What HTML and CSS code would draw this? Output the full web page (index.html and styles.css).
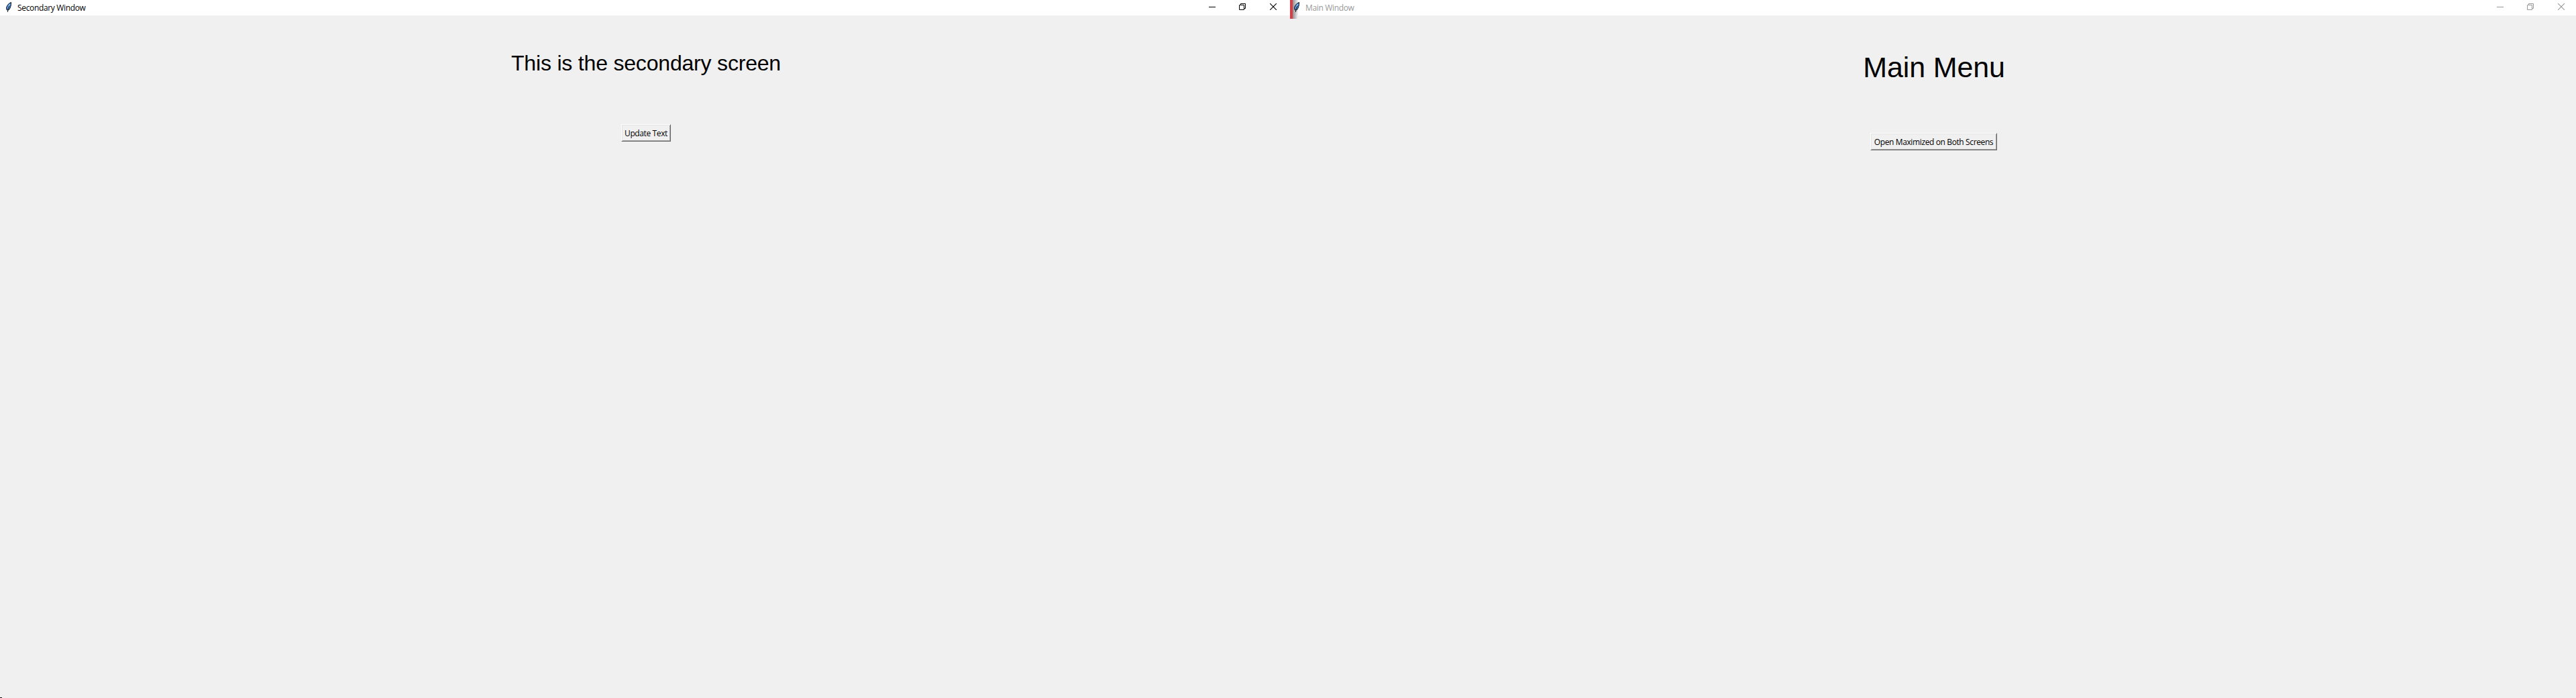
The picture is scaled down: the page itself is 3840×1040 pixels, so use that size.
FILE: index.html
```html
<!DOCTYPE html>
<html lang="en">
<head>
<meta charset="utf-8">
<title>Secondary Window</title>
<link rel="stylesheet" href="styles.css">
</head>
<body>
<svg class="defs" width="0" height="0" aria-hidden="true">
  <symbol id="feather" viewBox="0 0 16 16">
    <path d="M8.500 .500C5.500 1.500 2.500 4.500 1.500 8.500L2 11.500L3 12.500L5.500 11.500C7.500 9 9 4 8.500 .500Z" fill="#3f7cc4" stroke="#15181c"/>
    <path d="M7 3C5 5 4 8 3.500 10" fill="none" stroke="#8fc0f2" stroke-width="1.300"/>
    <path d="M5.800 6C4.500 8.500 3.500 11 3.500 15" fill="none" stroke="#15181c"/>
  </symbol>
  <symbol id="minimize" viewBox="0 0 10 10"><path d="M0 5.500H10" fill="none" stroke="currentColor"/></symbol>
  <symbol id="restore" viewBox="0 0 10 10"><path d="M.500 2.500H7.500V9.500H.500ZM2.500 2.500V.500H9.500V7.500H7.500" fill="none" stroke="currentColor"/></symbol>
  <symbol id="close" viewBox="0 0 10 10"><path d="M0 0L10 10M10 0L0 10" fill="none" stroke="currentColor" stroke-width="1.100"/></symbol>
</svg>
<main class="desktop">
  <section class="window secondary">
    <header class="titlebar">
      <svg class="app-icon" width="16" height="16"><use href="#feather"/></svg>
      <span class="title">Secondary Window</span>
      <div class="controls">
        <svg width="10" height="10"><use href="#minimize"/></svg>
        <svg width="10" height="10"><use href="#restore"/></svg>
        <svg width="10" height="10"><use href="#close"/></svg>
      </div>
    </header>
    <div class="content">
      <h1 class="heading">This is the secondary screen</h1>
      <button class="button update"><span>Update Text</span></button>
    </div>
  </section>
  <section class="window inactive">
    <span class="edge"></span>
    <header class="titlebar">
      <svg class="app-icon" width="16" height="16"><use href="#feather"/></svg>
      <span class="title">Main Window</span>
      <div class="controls">
        <svg width="10" height="10"><use href="#minimize"/></svg>
        <svg width="10" height="10"><use href="#restore"/></svg>
        <svg width="10" height="10"><use href="#close"/></svg>
      </div>
    </header>
    <div class="content">
      <h1 class="heading large">Main Menu</h1>
      <button class="button open"><span>Open Maximized on Both Screens</span></button>
    </div>
  </section>
  <span class="corner"></span>
</main>
</body>
</html>
```
FILE: styles.css
```css
body {
  margin: 0;
  background: #f0f0f0;
  color: #000;
  font-family: "Open Sans", "Noto Sans", sans-serif;
}
.defs { display: block; height: 0; }
.desktop {
  position: relative;
  display: grid;
  grid-template-columns: 1923px 1920px;
  width: 3840px;
  height: 1040px;
  overflow: hidden;
}
.window { position: relative; }
.titlebar {
  position: relative;
  display: flex;
  box-sizing: border-box;
  height: 23px;
  padding: 3px 20px 0 5px;
  background: #fff;
}
.secondary .titlebar { padding-left: 8px; }
.app-icon { flex: none; }
.title {
  margin-left: 2px;
  font-size: 12px;
  line-height: 16px;
  margin-top: 1px;
  letter-spacing: -0.34px;
  white-space: nowrap;
}
.controls {
  display: flex;
  gap: 36px;
  margin-left: auto;
  margin-top: 2px;
}
.controls svg:first-child { margin-right: -1px; }
.inactive .titlebar { background: none; }
.inactive { background: linear-gradient(#fff 23px, transparent 23px); }
.inactive .title, .inactive .controls { color: #999; }
.edge {
  position: absolute;
  top: 0;
  left: 0;
  width: 12px;
  height: 28px;
  background: linear-gradient(90deg, #dc3c46 4px, #909090 4px, #f4f4f4);
}
.content {
  display: flex;
  flex-direction: column;
  align-items: center;
}
.secondary .content { padding-left: 3px; }
.heading {
  margin: 53px 0 0;
  font: 400 32px/37px "Liberation Sans", Arial, sans-serif;
  letter-spacing: -0.19px;
  white-space: nowrap;
}
.heading.large {
  font-size: 43px;
  line-height: 49px;
  letter-spacing: -0.15px;
}
.button {
  box-sizing: border-box;
  height: 26px;
  margin: 72px 0 0;
  padding: 1px 0 0;
  border: 1px solid;
  border-color: #fff #696969 #696969 #fff;
  background: #f0f0f0;
  box-shadow: inset 1px 1px #e3e3e3, inset -1px -1px #a0a0a0;
  color: #000;
  font: 12px/21px "Open Sans", "Noto Sans", sans-serif;
  letter-spacing: -0.38px;
  white-space: nowrap;
}
.update { width: 74px; }
.open { width: 189px; margin: 73px 1px 0 0; }
.corner {
  position: absolute;
  left: 0;
  bottom: 0;
  width: 3px;
  height: 1px;
  background: #111;
}
```
